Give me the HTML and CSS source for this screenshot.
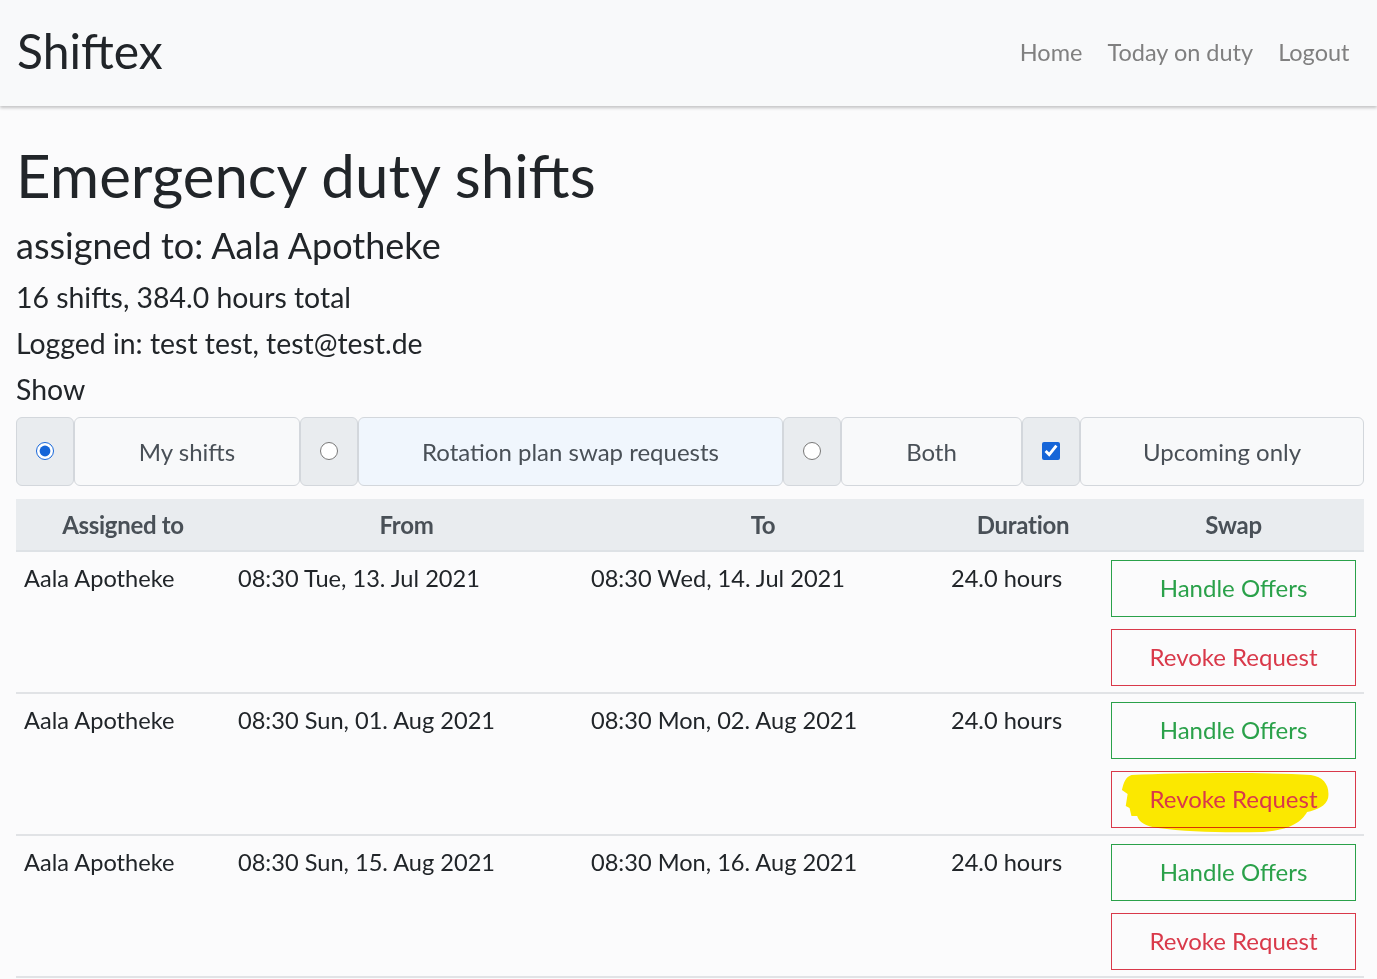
FILE: index.html
```html
<!DOCTYPE html>
<html lang="en">
<head>
<meta charset="utf-8">
<title>Shiftex</title>
<link rel="stylesheet" href="styles.css">
</head>
<body>
<nav class="navbar">
  <a class="brand" href="#">Shiftex</a>
  <ul class="nav-links">
    <li><a href="#">Home</a></li>
    <li><a href="#">Today on duty</a></li>
    <li><a href="#">Logout</a></li>
  </ul>
</nav>
<main class="container">
  <h1 class="title">Emergency duty shifts</h1>
  <h3 class="subtitle">assigned to: Aala Apotheke</h3>
  <p class="lead">16 shifts, 384.0 hours total</p>
  <p class="info">Logged in: test test, test@test.de</p>
  <p class="info">Show</p>
  <div class="filter-group">
    <span class="seg-input"><input type="radio" name="show" checked></span>
    <span class="seg-label w-my">My shifts</span>
    <span class="seg-input"><input type="radio" name="show"></span>
    <span class="seg-label w-rot hover">Rotation plan swap requests</span>
    <span class="seg-input"><input type="radio" name="show"></span>
    <span class="seg-label w-both">Both</span>
    <span class="seg-input"><input type="checkbox" checked></span>
    <span class="seg-label w-up">Upcoming only</span>
  </div>
  <table class="shifts">
    <colgroup>
      <col class="c1"><col class="c2"><col class="c3"><col class="c4"><col class="c5">
    </colgroup>
    <thead>
      <tr><th>Assigned to</th><th>From</th><th>To</th><th>Duration</th><th>Swap</th></tr>
    </thead>
    <tbody>
      <tr>
        <td>Aala Apotheke</td><td>08:30 Tue, 13. Jul 2021</td><td>08:30 Wed, 14. Jul 2021</td><td>24.0 hours</td>
        <td><div class="swap"><button class="btn btn-green">Handle Offers</button><button class="btn btn-red">Revoke Request</button></div></td>
      </tr>
      <tr>
        <td>Aala Apotheke</td><td>08:30 Sun, 01. Aug 2021</td><td>08:30 Mon, 02. Aug 2021</td><td>24.0 hours</td>
        <td><div class="swap"><button class="btn btn-green">Handle Offers</button><button class="btn btn-red marked"><svg class="marker" viewBox="0 0 220 62" preserveAspectRatio="none"><path d="M12 3 C60 1 150 0 200 3 C214 5 220 14 218 26 C216 34 206 38 196 40 C190 50 178 58 150 60 C110 61 70 60 40 56 C26 54 20 50 18 44 L12 44 L10 36 L6 34 L8 22 L2 18 C4 10 6 5 12 3 Z"/></svg><span class="btn-text">Revoke Request</span></button></div></td>
      </tr>
      <tr>
        <td>Aala Apotheke</td><td>08:30 Sun, 15. Aug 2021</td><td>08:30 Mon, 16. Aug 2021</td><td>24.0 hours</td>
        <td><div class="swap"><button class="btn btn-green">Handle Offers</button><button class="btn btn-red">Revoke Request</button></div></td>
      </tr>
    </tbody>
  </table>
</main>
</body>
</html>
```
FILE: styles.css
```css
* { box-sizing: border-box; }
html, body { margin: 0; padding: 0; }
body {
  font-family: Lato, "Open Sans", "Liberation Sans", sans-serif;
  font-size: 24px;
  line-height: 1.5;
  color: #212529;
  background: #fbfbfc;
}
.navbar {
  height: 106px;
  background: #f8f9fa;
  box-shadow: 0 2px 3px rgba(0,0,0,0.22);
  display: flex;
  align-items: center;
  justify-content: space-between;
  padding: 0 15px 0 17px;
  position: relative;
}
.brand {
  font-size: 48px;
  color: #212529;
  text-decoration: none;
  line-height: 1;
  margin-top: -4px;
}
.nav-links {
  list-style: none;
  margin: 0;
  padding: 0;
  display: flex;
}
.nav-links a {
  display: block;
  padding: 0 12.5px;
  color: #808080;
  text-decoration: none;
  font-size: 23.5px;
  margin-top: -1px;
}
.container {
  padding: 0 13px 0 16px;
}
.title {
  font-size: 60px;
  font-weight: 400;
  line-height: 1.2;
  margin: 33px 0 0 0;
}
.subtitle {
  font-size: 36px;
  font-weight: 400;
  line-height: 1.2;
  margin: 13px 0 9px 0;
}
.lead {
  font-size: 28.4px;
  margin: 0 0 3.5px 0;
  line-height: 1.5;
}
.info {
  font-size: 28.4px;
  margin: 0 0 3.5px 0;
  line-height: 1.5;
}
.filter-group {
  display: flex;
  height: 69px;
  margin-top: 6px;
  margin-bottom: 13px;
}
.seg-input, .seg-label {
  border: 1px solid #d3d7dc;
  border-radius: 6px;
  display: flex;
  align-items: center;
  justify-content: center;
}
.seg-input {
  width: 58px;
  background: #e9ecef;
}
.seg-input input {
  width: 18px;
  height: 18px;
  margin: 0;
  accent-color: #1565d8;
  position: relative;
  top: -1px;
}
.seg-label {
  background: #f8f9fa;
  color: #495057;
  font-size: 24px;
  padding-bottom: 0;
}
.seg-label.hover { background: #f0f6fd; }
.w-my { width: 226px; }
.w-rot { width: 425px; }
.w-both { width: 181px; }
.w-up { flex: 1; }
.shifts {
  width: 100%;
  border-collapse: collapse;
  table-layout: fixed;
}
.c1 { width: 214px; }
.c2 { width: 353px; }
.c3 { width: 360px; }
.c4 { width: 160px; }
.c5 { width: auto; }
.shifts th {
  background: #e9ecef;
  color: #495057;
  font-weight: 700;
  text-align: center;
  padding: 8px 8px 7px;
  border-bottom: 2px solid #dee2e6;
  letter-spacing: -0.3px;
}
.shifts td {
  vertical-align: top;
  padding: 8px 8px 6px 8px;
  border-bottom: 2px solid #e1e3e6;
  white-space: nowrap;
  font-size: 23.6px;
  line-height: 36px;
}
.swap {
  display: flex;
  flex-direction: column;
  gap: 12px;
}
.btn {
  font-family: inherit;
  font-size: 24px;
  line-height: 36px;
  padding: 9px 12px 10px;
  background: transparent;
  border: 1px solid;
  border-radius: 0;
  width: 100%;
  cursor: pointer;
}
.btn-green { color: #2aa14a; border-color: #2aa14a; }
.btn-red { color: #d9394a; border-color: #d9394a; }
.marked { position: relative; }
.marker {
  position: absolute;
  left: 8px;
  top: 0px;
  width: 210px;
  height: 62px;
  fill: #ffec00;
  mix-blend-mode: multiply;
}
.btn-text { position: relative; }
```
